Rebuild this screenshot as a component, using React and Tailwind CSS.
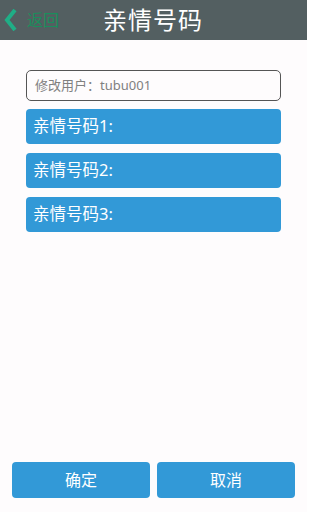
import React from "react";

const font = { fontFamily: '"Noto Sans", "Noto Sans CJK SC", sans-serif' };

function App() {
  const rows = ["亲情号码1:", "亲情号码2:", "亲情号码3:"];
  return (
    <div className="w-[307px] h-[512px] bg-[#fefcfd] flex flex-col" style={font}>
      <div className="h-[40px] bg-[#535f61] flex items-center relative">
        <div className="flex items-center pl-[4px]">
          <svg width="14" height="22" viewBox="0 0 14 22">
            <path d="M11 1 L3 11 L11 21" stroke="#1fae86" strokeWidth="4" fill="none" strokeLinejoin="miter" />
          </svg>
          <span className="ml-[9px] text-[16px] text-[#1a8e5c] leading-none">返回</span>
        </div>
        <div className="absolute left-[103px] top-0 h-[40px] flex items-center text-[24px] text-white leading-none tracking-[1px]">
          亲情号码
        </div>
      </div>

      <div className="px-[26px] pt-[30px] flex flex-col">
        <div className="h-[31px] border border-[#555] rounded-[5px] flex items-center pl-[8px] text-[13px] text-[#808080]">
          修改用户：tubu001
        </div>
        <div className="flex flex-col gap-[9px] mt-[8px]">
          {rows.map((r) => (
            <div key={r} className="h-[35px] bg-[#3299d7] rounded-[4px] flex items-center pl-[7px] text-[16.5px] text-white">
              {r}
            </div>
          ))}
        </div>
      </div>

      <div className="mt-auto mb-[14px] px-[12px] flex gap-[7px]">
        <button className="flex-1 h-[36px] bg-[#3299d7] rounded-[4px] text-white text-[16px]">确定</button>
        <button className="flex-1 h-[36px] bg-[#3299d7] rounded-[4px] text-white text-[16px]">取消</button>
      </div>
    </div>
  );
}

export default App;
